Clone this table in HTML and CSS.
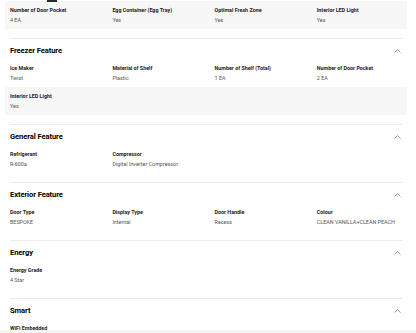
FILE: index.html
```html
<!DOCTYPE html>
<html lang="en">
<head>
<meta charset="utf-8">
<title>Specs</title>
<link rel="stylesheet" href="styles.css">
</head>
<body>
<div class="tab-mark"></div>
<main class="specs">
  <div class="tail">
    <div class="row alt">
      <div class="item"><div class="label">Number of Door Pocket</div><div class="value">4 EA</div></div>
      <div class="item"><div class="label">Egg Container (Egg Tray)</div><div class="value">Yes</div></div>
      <div class="item"><div class="label">Optimal Fresh Zone</div><div class="value">Yes</div></div>
      <div class="item"><div class="label">Interior LED Light</div><div class="value">Yes</div></div>
    </div>
  </div>

  <section class="section">
    <div class="head"><h2>Freezer Feature</h2><svg class="chev" viewBox="0 0 7 4" width="7" height="4"><polyline points="0.5,3.5 3.5,0.7 6.5,3.5"/></svg></div>
    <div class="row">
      <div class="item"><div class="label">Ice Maker</div><div class="value">Twist</div></div>
      <div class="item"><div class="label">Material of Shelf</div><div class="value">Plastic</div></div>
      <div class="item"><div class="label">Number of Shelf (Total)</div><div class="value">1 EA</div></div>
      <div class="item"><div class="label">Number of Door Pocket</div><div class="value">2 EA</div></div>
    </div>
    <div class="row alt">
      <div class="item"><div class="label">Interior LED Light</div><div class="value">Yes</div></div>
    </div>
  </section>

  <section class="section">
    <div class="head"><h2>General Feature</h2><svg class="chev" viewBox="0 0 7 4" width="7" height="4"><polyline points="0.5,3.5 3.5,0.7 6.5,3.5"/></svg></div>
    <div class="row">
      <div class="item"><div class="label">Refrigerant</div><div class="value">R-600a</div></div>
      <div class="item"><div class="label">Compressor</div><div class="value">Digital Inverter Compressor</div></div>
    </div>
  </section>

  <section class="section">
    <div class="head"><h2>Exterior Feature</h2><svg class="chev" viewBox="0 0 7 4" width="7" height="4"><polyline points="0.5,3.5 3.5,0.7 6.5,3.5"/></svg></div>
    <div class="row">
      <div class="item"><div class="label">Door Type</div><div class="value">BESPOKE</div></div>
      <div class="item"><div class="label">Display Type</div><div class="value">Internal</div></div>
      <div class="item"><div class="label">Door Handle</div><div class="value">Recess</div></div>
      <div class="item"><div class="label">Colour</div><div class="value">CLEAN VANILLA+CLEAN PEACH</div></div>
    </div>
  </section>

  <section class="section">
    <div class="head"><h2>Energy</h2><svg class="chev" viewBox="0 0 7 4" width="7" height="4"><polyline points="0.5,3.5 3.5,0.7 6.5,3.5"/></svg></div>
    <div class="row">
      <div class="item"><div class="label">Energy Grade</div><div class="value">4 Star</div></div>
    </div>
  </section>

  <section class="section">
    <div class="head"><h2>Smart</h2><svg class="chev" viewBox="0 0 7 4" width="7" height="4"><polyline points="0.5,3.5 3.5,0.7 6.5,3.5"/></svg></div>
    <div class="row">
      <div class="item"><div class="label">WiFi Embedded</div><div class="value">Yes</div></div>
    </div>
  </section>
</main>
<div class="bottom-bar"></div>
</body>
</html>
```
FILE: styles.css
```css
html, body {
  margin: 0;
  padding: 0;
  background: #ffffff;
  overflow: hidden;
}
body {
  font-family: Roboto, "Noto Sans", "Liberation Sans", sans-serif;
  color: #1a1a1a;
}
.tab-mark {
  position: absolute;
  top: 0;
  left: 47px;
  width: 10px;
  height: 2px;
  background: #2a2a2a;
}
.specs {
  padding: 1px 14px 0 10px;
}
.tail {
  padding-bottom: 8.7px;
}
.section {
  border-top: 1px solid #ececec;
  padding-bottom: 8.5px;
}
.head {
  display: flex;
  justify-content: space-between;
  align-items: center;
  padding: 5px 1px 1.5px 0;
  height: 14px;
}
.head h2 {
  margin: 0;
  font-size: 7.6px;
  line-height: 14px;
  font-weight: 700;
  color: #000;
  letter-spacing: -0.1px;
}
.chev {
  display: block;
  fill: none;
  stroke: #8a8a8a;
  stroke-width: 0.9;
}
.row {
  display: grid;
  grid-template-columns: 102.4px 102.2px 102.2px 1fr;
  margin: 0 -5px;
  padding: 4px 5px;
  height: 20px;
}
.row.alt {
  background: #f7f7f7;
}
.item {
  min-width: 0;
  white-space: nowrap;
}
.label {
  font-size: 5.35px;
  line-height: 10px;
  font-weight: 700;
  color: #1c1c1c;
}
.value {
  font-size: 5.4px;
  line-height: 10px;
  font-weight: 400;
  color: #555;
}
.bottom-bar {
  position: fixed;
  left: 0;
  right: 0;
  bottom: 0;
  height: 3px;
  background: #f4f4f4;
}
```
